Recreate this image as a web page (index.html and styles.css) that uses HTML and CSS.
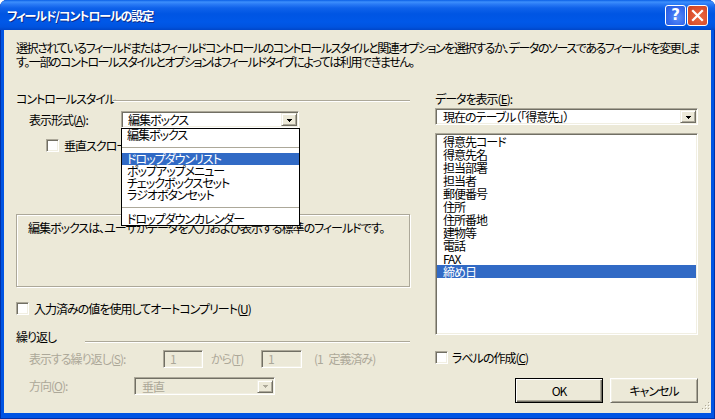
FILE: index.html
```html
<!DOCTYPE html>
<html lang="ja">
<head>
<meta charset="utf-8">
<title>フィールド/コントロールの設定</title>
<link rel="stylesheet" href="styles.css">
</head>
<body>
<div class="window">
  <div class="titlebar">
    <span class="title">フィールド/コントロールの設定</span>
    <div class="tb-buttons">
      <span class="tb-btn help">?</span>
      <span class="tb-btn close"><svg width="19" height="19" viewBox="0 0 19 19"><path d="M5 5 L14 14 M14 5 L5 14" stroke="#fff" stroke-width="2.2" stroke-linecap="square"/></svg></span>
    </div>
  </div>
  <div class="frame">
    <div class="body">
      <p class="intro">選択されているフィールドまたはフィールドコントロールのコントロールスタイルと関連オプションを選択するか、データのソースであるフィールドを変更しま<br>す。一部のコントロールスタイルとオプションはフィールドタイプによっては利用できません。</p>
      <div class="columns">
        <div class="left">
          <div class="group-head style-head"><span class="glabel">コントロールスタイル</span><span class="etch"></span></div>
          <div class="row format-row">
            <span class="flabel">表示形式(<u>A</u>):</span>
            <div class="combo-wrap">
              <div class="combo sunken">
                <span class="ctext">編集ボックス</span>
                <span class="dropbtn"><svg width="5" height="3" viewBox="0 0 5 3"><rect x="0" y="0" width="5" height="1" fill="#000"/><rect x="1" y="1" width="3" height="1" fill="#000"/><rect x="2" y="2" width="1" height="1" fill="#000"/></svg></span>
              </div>
              <ul class="droplist">
                <li>編集ボックス</li>
                <li class="sep"></li>
                <li class="sel">ドロップダウンリスト</li>
                <li>ポップアップメニュー</li>
                <li>チェックボックスセット</li>
                <li>ラジオボタンセット</li>
                <li class="sep"></li>
                <li>ドロップダウンカレンダー</li>
              </ul>
            </div>
          </div>
          <div class="check-row scroll-row"><span class="checkbox"></span><span>垂直スクロールバー</span></div>
          <div class="descbox">編集ボックスは、ユーザがデータを入力および表示する標準のフィールドです。</div>
          <div class="check-row auto-row"><span class="checkbox"></span><span>入力済みの値を使用してオートコンプリート(<u>U</u>)</span></div>
          <div class="group-head rep-head"><span class="glabel">繰り返し</span><span class="etch"></span></div>
          <div class="row rep-row disabled">
            <span class="rlabel">表示する繰り返し(<u>S</u>):</span>
            <span class="edit sunken e1">1</span>
            <span class="kara">から(<u>T</u>)</span>
            <span class="edit sunken e2">1</span>
            <span class="defined">(1 定義済み)</span>
          </div>
          <div class="row dir-row disabled">
            <span class="dlabel">方向(<u>O</u>):</span>
            <div class="combo sunken dcombo">
              <span class="ctext">垂直</span>
              <span class="dropbtn"><svg width="5" height="3" viewBox="0 0 5 3"><rect x="0" y="0" width="5" height="1" fill="#aca899"/><rect x="1" y="1" width="3" height="1" fill="#aca899"/><rect x="2" y="2" width="1" height="1" fill="#aca899"/></svg></span>
            </div>
          </div>
        </div>
        <div class="right">
          <div class="dlabel-right">データを表示(<u>E</u>):</div>
          <div class="combo sunken rcombo">
            <span class="ctext">現在のテーブル（「得意先」）</span>
            <span class="dropbtn"><svg width="5" height="3" viewBox="0 0 5 3"><rect x="0" y="0" width="5" height="1" fill="#000"/><rect x="1" y="1" width="3" height="1" fill="#000"/><rect x="2" y="2" width="1" height="1" fill="#000"/></svg></span>
          </div>
          <ul class="listbox sunken">
            <li>得意先コード</li>
            <li>得意先名</li>
            <li>担当部署</li>
            <li>担当者</li>
            <li>郵便番号</li>
            <li>住所</li>
            <li>住所番地</li>
            <li>建物等</li>
            <li>電話</li>
            <li>FAX</li>
            <li class="sel">締め日</li>
          </ul>
          <div class="check-row label-row"><span class="checkbox"></span><span>ラベルの作成(<u>C</u>)</span></div>
          <div class="buttons">
            <span class="btn default">OK</span>
            <span class="btn">キャンセル</span>
          </div>
        </div>
      </div>
      <svg class="grip" width="11" height="11" viewBox="0 0 11 11">
        <g fill="#fff"><rect x="9" y="1" width="1" height="1"/><rect x="6" y="4" width="1" height="1"/><rect x="9" y="4" width="1" height="1"/><rect x="3" y="7" width="1" height="1"/><rect x="6" y="7" width="1" height="1"/><rect x="9" y="7" width="1" height="1"/></g>
        <g fill="#aca899"><rect x="8" y="0" width="1" height="1"/><rect x="5" y="3" width="1" height="1"/><rect x="8" y="3" width="1" height="1"/><rect x="2" y="6" width="1" height="1"/><rect x="5" y="6" width="1" height="1"/><rect x="8" y="6" width="1" height="1"/></g>
      </svg>
    </div>
  </div>
</div>
</body>
</html>
```
FILE: styles.css
```css
* { box-sizing: border-box; }
html, body { margin: 0; padding: 0; background: #ffffff; }
body {
  font-family: "Noto Sans CJK JP", "Noto Sans", sans-serif;
  font-size: 12px;
  font-feature-settings: "palt";
  letter-spacing: -1px;
  color: #000;
  line-height: 14px;
  white-space: nowrap;
}
u { text-decoration: underline; text-underline-offset: 1px; }

.window {
  width: 715px;
  height: 419px;
  display: flex;
  flex-direction: column;
  background: #0054e3;
  border-radius: 7px 7px 0 0;
  overflow: hidden;
  box-shadow: inset 1px 0 0 #0030a8, inset -1px 0 0 #0030a8, inset 0 -1px 0 #0030a8;
}

.titlebar {
  height: 30px;
  flex: none;
  display: flex;
  align-items: center;
  padding: 2px 7px 0 7px;
  background: linear-gradient(180deg, #0a5fe6 0px, #3d8ffc 2px, #2b7cf6 4px, #0f62ea 8px, #0055e3 14px, #0058e8 22px, #0053df 27px, #0046c8 30px);
}
.title {
  flex: 1;
  color: #fff;
  font-weight: bold;
  font-size: 12px;
  letter-spacing: -1.1px;
  line-height: 16px;
  text-shadow: 1px 1px 0 #0c2a8a;
}
.tb-buttons { display: flex; gap: 1px; margin-top: -2px; }
.tb-btn {
  width: 21px;
  height: 21px;
  border: 1px solid #fff;
  border-radius: 3px;
  display: flex;
  align-items: center;
  justify-content: center;
  letter-spacing: 0;
}
.help {
  background: radial-gradient(circle at 60% 60%, #5a8ff8 0, #3a6ff0 45%, #2357dc 100%);
  color: #fff;
  font-family: "DejaVu Sans", sans-serif;
  font-weight: bold;
  font-size: 15px;
  line-height: 19px;
}
.close {
  background: radial-gradient(circle at 60% 60%, #e9683f 0, #df5431 50%, #c8401e 100%);
}
.close svg { display: block; }

.frame {
  flex: 1;
  display: flex;
  padding: 0 5px 6px 4px;
}
.body {
  flex: 1;
  background: #ece9d8;
  padding: 11px 12px 0 12px;
  position: relative;
}

.intro { margin: 0; line-height: 14px; letter-spacing: -1.4px; }

.columns { display: flex; gap: 25px; margin-top: 23px; }
.left { width: 394px; display: flex; flex-direction: column; }
.right { width: 263px; display: flex; flex-direction: column; }

.group-head { display: flex; align-items: flex-start; height: 13px; line-height: 13px; }
.etch { flex: 1; height: 2px; border-top: 1px solid #aca899; border-bottom: 1px solid #fff; }
.style-head .glabel { width: 97px; }
.style-head .etch { margin-top: 8px; }

.row { display: flex; align-items: center; }
.format-row { margin-top: 6px; height: 17px; }
.flabel { width: 92px; margin-left: 13px; }

.sunken {
  border: 1px solid;
  border-color: #aca899 #fff #fff #aca899;
  box-shadow: inset 1px 1px 0 #716f64, inset -1px -1px 0 #f1efe2;
}

.combo-wrap { position: relative; width: 178px; height: 17px; }
.combo {
  display: flex;
  align-items: center;
  height: 17px;
  background: #fff;
  padding: 1px;
}
.combo-wrap .combo { width: 178px; }
.ctext { flex: 1; padding-left: 5px; line-height: 13px; }
.dropbtn {
  width: 16px;
  height: 13px;
  flex: none;
  display: flex;
  align-items: center;
  justify-content: center;
  background: #ece9d8;
  border: 1px solid;
  border-color: #f1efe2 #716f64 #716f64 #f1efe2;
  box-shadow: inset 1px 1px 0 #fff, inset -1px -1px 0 #aca899;
  padding-top: 1px;
}
.dropbtn svg { display: block; }

.droplist {
  position: absolute;
  top: 17px;
  left: 0;
  width: 179px;
  margin: 0;
  padding: 0;
  list-style: none;
  background: #fff;
  border: 1px solid #000;
  z-index: 5;
}
.droplist li { height: 12px; line-height: 12px; padding-left: 5px; }
.droplist li.sel { background: #316ac5; color: #fff; }
.droplist li.sep { position: relative; }
.droplist li.sep::after {
  content: "";
  position: absolute;
  left: 0; right: 0; top: 6px;
  height: 1px;
  background: #aca899;
}

.check-row { display: flex; align-items: center; height: 13px; line-height: 13px; }
.checkbox {
  width: 13px;
  height: 13px;
  flex: none;
  background: #fff;
  border: 1px solid;
  border-color: #aca899 #fff #fff #aca899;
  box-shadow: inset 1px 1px 0 #716f64, inset -1px -1px 0 #f1efe2;
  margin-right: 5px;
}
.scroll-row { margin-top: 11px; padding-left: 30px; }

.descbox {
  margin-top: 62px;
  height: 73px;
  border: 1px solid #aca899;
  box-shadow: inset 1px 1px 0 #fff, 1px 1px 0 #fff;
  padding: 6px 0 0 11px;
  line-height: 14px;
}

.auto-row { margin-top: 15px; }

.rep-head { margin-top: 15px; }
.rep-head .glabel { width: 69px; }
.rep-head .etch { margin-top: 11px; }

.disabled { color: #aca899; }
.rep-row { margin-top: 7px; height: 18px; }
.rlabel { width: 134px; margin-left: 13px; }
.edit {
  height: 18px;
  display: flex;
  align-items: center;
  padding-left: 6px;
  background: #ece9d8;
}
.e1 { width: 40px; }
.e2 { width: 41px; }
.kara { width: 50px; margin-left: 8px; }
.defined { margin-left: 12px; word-spacing: 4px; }

.dir-row { margin-top: 9px; height: 18px; }
.dlabel { width: 105px; margin-left: 13px; }
.dcombo { width: 141px; height: 18px; background: #ece9d8; }
.dcombo .ctext { padding-left: 6px; }

.dlabel-right { height: 13px; line-height: 13px; }
.rcombo { margin-top: 3px; width: 263px; }
.rcombo .ctext { padding-left: 6px; }

.listbox {
  margin: 8px 0 0 0;
  height: 202px;
  padding: 1px;
  list-style: none;
  background: #fff;
}
.listbox li { height: 13px; line-height: 13px; padding-left: 6px; }
.listbox li.sel { background: #316ac5; color: #fff; }

.label-row { margin-top: 16px; }
.label-row .checkbox { margin-right: 4px; }

.buttons { display: flex; justify-content: flex-end; gap: 7px; margin-top: 14px; }
.btn {
  width: 88px;
  height: 25px;
  display: flex;
  align-items: center;
  justify-content: center;
  background: #ece9d8;
  border: 1px solid;
  border-color: #fff #716f64 #716f64 #fff;
  box-shadow: inset 1px 1px 0 #f1efe2, inset -1px -1px 0 #aca899;
}
.btn.default {
  border: 1px solid #000;
  box-shadow: inset 1px 1px 0 #fff, inset -1px -1px 0 #716f64, inset -2px -2px 0 #aca899;
}

.grip { position: absolute; right: 0; bottom: 0; display: block; }
```
